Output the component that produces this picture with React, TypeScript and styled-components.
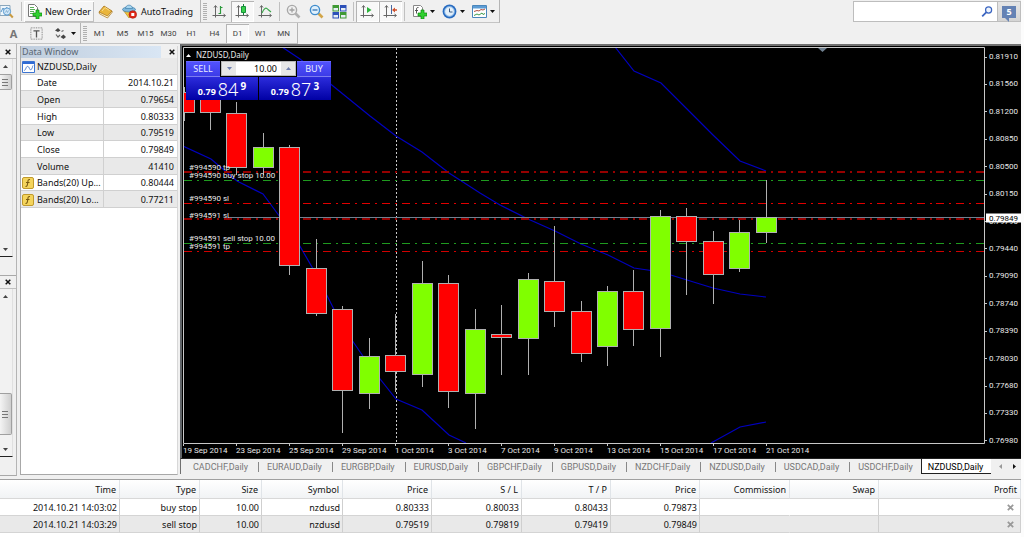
import React from "react";
import styled, { createGlobalStyle, css } from "styled-components";

const ui = '"Noto Sans", "Open Sans", sans-serif';
const narrow = 'Roboto, "Liberation Sans", sans-serif';

const GlobalStyle = createGlobalStyle`
  *, *::before, *::after { box-sizing: border-box; }
  body { margin: 0; background: #fff; font-family: ${ui}; font-size: 9px; line-height: 12px; color: #111; }
  button, input { font: inherit; color: inherit; margin: 0; padding: 0; border: 0; background: none; }
  svg { display: block; flex: none; }
`;

const Shell = styled.div`
  display: flex;
  flex-direction: column;
  height: 100vh;
  min-height: 420px;
  padding-right: 3px;
  background: #f0f0f0;
  box-shadow: inset -3px 0 #fcfcfc;
  overflow: hidden;
`;

/* ---------- toolbars ---------- */

const Toolbar = styled.div<{ $height: number }>`
  display: flex;
  flex: none;
  height: ${(p) => p.$height}px;
  background: #f0f0f0;
`;

const ToolGroup = styled.div<{ $inset?: boolean }>`
  display: flex;
  align-items: stretch;
  border-right: 1px solid #b4b4b4;
  border-bottom: 1px solid #c4c4c4;
  padding: 1px 2px 0 ${(p) => (p.$inset ? 2 : 0)}px;
`;

const Gripper = styled.span`
  width: 4px;
  margin: 2px 1px 2px 2px;
  background: repeating-linear-gradient(#b0b0b0 0 1px, #f0f0f0 1px 2px);
`;

const Separator = styled.span`
  width: 1px;
  margin: 1px 2px;
  background: #c0c0c0;
`;

const ToolButton = styled.button<{ $pressed?: boolean; $start?: boolean }>`
  display: flex;
  align-items: center;
  justify-content: ${(p) => (p.$start ? "flex-start" : "center")};
  width: ${(p) => (p.$start ? 19 : 23)}px;
  ${(p) =>
    p.$pressed &&
    css`
      background: #f8f8f8;
      box-shadow: inset 1px 1px #b4b4b4, inset -1px -1px #fff;
    `}
`;

const DropButton = styled.button`
  display: flex;
  align-items: center;
  gap: 3px;
  width: 30px;
  padding-left: 5px;
`;

const TextButton = styled.button<{ $raised?: boolean }>`
  display: flex;
  align-items: center;
  gap: 4px;
  padding: 0 5px;
  white-space: nowrap;
  ${(p) =>
    p.$raised &&
    css`
      gap: 3px;
      padding: 0 3px;
      background: #f5f5f5;
      box-shadow: inset 1px 1px #fff, inset -1px -1px #c0c0c0;
    `}
`;

const PeriodButton = styled(ToolButton)`
  font-family: ${narrow};
  font-size: 8px;
  color: #444;
`;

const LetterButton = styled(ToolButton)`
  font-size: 11px;
  font-weight: 700;
  color: #777;
`;

const SearchArea = styled.div`
  display: flex;
  margin: 1px 0 1px auto;
  border: 1px solid #bdbdbd;
`;

const SearchBox = styled.label`
  display: flex;
  align-items: center;
  width: 143px;
  padding-right: 4px;
  background: #fff;
`;

const SearchInput = styled.input`
  flex: 1;
  min-width: 0;
  padding-left: 3px;
  outline: 0;
`;

const ChatButton = styled.button`
  display: flex;
  align-items: center;
  justify-content: center;
  width: 23px;
  background: linear-gradient(#e6e6e6, #d4d4d4);
  border-left: 1px solid #bdbdbd;
`;

const ChatBadge = styled.span`
  position: relative;
  width: 14px;
  height: 12px;
  background: #6482b4;
  color: #fff;
  font-weight: 700;
  text-align: center;

  &::after {
    content: "";
    position: absolute;
    left: 3px;
    top: 12px;
    border: 2px solid transparent;
    border-top-color: #6482b4;
    border-right-color: #6482b4;
  }
`;

/* ---------- side panels ---------- */

const Main = styled.div`
  display: flex;
  flex: 1;
  min-height: 0;
`;

const SideStrip = styled.div`
  display: flex;
  flex-direction: column;
  width: 17px;
  padding-top: 2px;
  border-right: 1px solid #b4b4b4;
  border-bottom: 1px solid #a8a8a8;
`;

const SidePanel = styled.div<{ $grow: number }>`
  display: flex;
  flex-direction: column;
  flex: ${(p) => p.$grow} 1 0;
  min-height: 0;
  padding-bottom: 18px;

  & + & { border-top: 1px solid #a8a8a8; }
`;

const SideHead = styled.div`
  display: flex;
  align-items: center;
  justify-content: flex-end;
  height: 13px;
  padding-right: 5px;
  background: #f0f0f0;
  border-bottom: 1px solid #c0c0c0;
`;

const CloseButton = styled.button`
  display: flex;
  align-items: center;
  height: 12px;
`;

const ScrollTrack = styled.div`
  display: flex;
  flex-direction: column;
  flex: 1;
  align-items: flex-start;
  justify-content: space-between;
  min-height: 0;
  margin-right: 3px;
  padding: 5px 0 4px;
  border-right: 1px solid #e0e0e0;
  border-bottom: 1px solid #222;
  background: #f2f2f2;
`;

const ScrollArrow = styled.button`
  display: flex;
  align-items: center;
  height: 5px;
  margin-left: 3px;
`;

const ScrollThumb = styled.div<{ $size: number; $low?: boolean }>`
  display: flex;
  align-items: center;
  width: 12px;
  height: ${(p) => p.$size}px;
  margin: ${(p) => (p.$low ? "auto 0 12px" : "5px 0 auto")};
  padding-left: 2px;
  background: linear-gradient(90deg, #f4f4f4, #cfcfcf);
  border: 1px solid #a0a0a0;
  border-left: 0;
  border-radius: 0 2px 2px 0;
`;

const DataPanel = styled.section`
  display: flex;
  flex-direction: column;
  width: 158px;
  margin: 2px 2px 1px 3px;
  background: #fff;
  border-left: 1px solid #a8a8a8;
  border-right: 1px solid #d8d8d8;
  border-bottom: 1px solid #a8a8a8;
`;

const DataHead = styled.header`
  display: flex;
  align-items: center;
  justify-content: space-between;
  height: 12px;
  flex: none;
  padding: 0 2px 0 1px;
  color: #5a6672;
  background: linear-gradient(90deg, #bfcddd, #d9e6f4 90%, #f0f0f0 90%);
`;

const DataTable = styled.table`
  width: 100%;
  height: 150px;
  border-collapse: collapse;
  table-layout: fixed;
`;

const DataRow = styled.tr<{ $shade?: boolean }>`
  background: ${(p) => (p.$shade ? "#e9e9e9" : "#fff")};
  border-bottom: 1px solid #d0d0d0;
`;

const DataName = styled.th`
  padding: 2px 0 0;
  font-weight: 400;
  text-align: left;
`;

const NameLine = styled.span`
  display: flex;
  align-items: center;
  gap: 3px;
  padding-left: 1px;
  white-space: nowrap;
`;

const IconSlot = styled.span`
  width: 12px;
  flex: none;
`;

const DataValue = styled.td`
  padding: 2px 3px 0 0;
  text-align: right;
  border-left: 1px solid #d0d0d0;
`;

/* ---------- chart ---------- */

const ChartColumn = styled.section`
  display: flex;
  flex-direction: column;
  flex: 1;
  min-width: 0;
  padding-bottom: 2px;
`;

const ChartFrame = styled.div`
  display: grid;
  flex: 1;
  min-height: 0;
  grid-template-columns: minmax(0, 1fr) 36px;
  grid-template-rows: minmax(0, 1fr) 14px;
  padding: 1px 0 0 1px;
  background: #000;
  border-top: 2px solid #707070;
  border-left: 2px solid #606468;
  color: #e8e8e8;
  font-family: ${narrow};
  font-size: 8px;
  line-height: 10px;
`;

const Plot = styled.div`
  position: relative;
  min-height: 0;
  overflow: hidden;
`;

const OrderLabel = styled.span`
  position: absolute;
  left: 6px;
  line-height: 8px;
  transform: translateY(-100%);
  white-space: nowrap;
`;

const PriceAxis = styled.div`
  position: relative;
  min-height: 0;
`;

const PriceList = styled.ol`
  display: flex;
  flex-direction: column;
  justify-content: space-between;
  height: calc(100% + 2px);
  margin: 0;
  padding: 5px 0 0;
  list-style: none;
`;

const PriceItem = styled.li`
  display: flex;
  align-items: center;
  gap: 2px;

  &::before { content: ""; width: 2px; height: 1px; background: #c8c8c8; }
`;

const CurrentPrice = styled.span`
  position: absolute;
  left: 1px;
  right: 0;
  padding-left: 3px;
  line-height: 9px;
  transform: translateY(-50%);
  background: #fff;
  color: #000;
`;

const DateAxis = styled.div`
  display: flex;
  overflow: hidden;
`;

const DateItem = styled.span`
  flex: 0 0 53px;
  padding-top: 2px;
  white-space: nowrap;
  background: linear-gradient(#c8c8c8, #c8c8c8) 0 0 / 1px 2px no-repeat;
`;

const TradePanel = styled.div`
  position: absolute;
  left: 3px;
  top: 2px;
  width: 145px;
  font-family: ${ui};
`;

const TradeTitle = styled.div`
  display: flex;
  align-items: center;
  gap: 5px;
  height: 12px;
`;

const TradeGrid = styled.div`
  display: grid;
  grid-template-columns: 34px 38px 1px 38px 34px;
  grid-template-rows: 16px 23px;
  background: #000;
`;

const SideButton = styled.button`
  font-size: 9px;
  color: #e8ecff;
  background: linear-gradient(#5454ff, #3a3ae6);
  box-shadow: inset 0 -1px #7c7cf0, inset 0 1px #6a6aff;
`;

const VolumeBox = styled.div`
  display: flex;
  grid-column: span 3;
  margin: 0 1px 1px;
  background: #fff;
  border: 1px solid #b8b8b8;
`;

const Spin = styled.button`
  display: flex;
  align-items: center;
  justify-content: center;
  width: 14px;
  background: #e6e6e6;
`;

const VolumeInput = styled.input`
  flex: 1;
  min-width: 0;
  padding-right: 4px;
  text-align: right;
  font-size: 9px;
  color: #000;
`;

const PriceButton = styled.button`
  display: flex;
  grid-column: span 2;
  align-items: center;
  justify-content: center;
  gap: 2px;
  color: #fff;
  background: linear-gradient(#2c2cdc, #0000a4);
`;

const PriceBase = styled.b`
  font-size: 9px;
  padding-top: 6px;
`;

const PricePips = styled.span`
  font-size: 18px;
  font-weight: 300;
  line-height: 20px;
`;

const PricePoint = styled.b`
  font-size: 10px;
  padding-bottom: 6px;
`;

const TabStrip = styled.nav`
  display: flex;
  flex: none;
  height: 16px;
  border-left: 1px solid #707070;
  border-top: 1px solid #202020;
  padding-left: 4px;
  font-family: ${narrow};
`;

const Tab = styled.button<{ $active?: boolean; $last?: boolean }>`
  padding: 1px 10px 0 8px;
  color: #777;
  white-space: nowrap;

  ${(p) =>
    !p.$active &&
    !p.$last &&
    css`
      border-right: 1px solid transparent;
      background: linear-gradient(#888, #888) 100% 50% / 1px 10px no-repeat border-box;
    `}
  ${(p) =>
    p.$active &&
    css`
      padding: 1px 8px 0 6px;
      margin-left: -2px;
      color: #000;
      background: #fff;
      border-left: 1px solid #202020;
      border-bottom: 1px solid #202020;
    `}
`;

const TabArrows = styled.div`
  display: flex;
  align-items: center;
  gap: 9px;
  margin-left: auto;
  padding-right: 4px;
`;

/* ---------- terminal ---------- */

const Terminal = styled.section`
  flex: none;
  padding: 3px 0 4px;
  background: linear-gradient(#f0f0f0 0 3px, #fff 3px);
`;

const OrdersTable = styled.table`
  width: 100%;
  border-collapse: separate;
  border-spacing: 0;
  table-layout: fixed;
  border-top: 1px solid #a0a0a0;
`;

const HeadCell = styled.th`
  height: 19px;
  padding: 2px 3px 0 0;
  font-weight: 400;
  text-align: right;
  background: linear-gradient(#fff, #f1f3f5);
  border-right: 1px solid #e0e4e8;
  border-bottom: 1px solid #d8d8d8;
`;

const OrderRow = styled.tr<{ $shade?: boolean }>`
  background: ${(p) => (p.$shade ? "#e9e9e9" : "#fff")};
`;

const OrderCell = styled.td<{ $open?: boolean }>`
  height: 17px;
  padding: 1px 2px 0 0;
  text-align: right;
  border-right: 1px solid ${(p) => (p.$open ? "transparent" : "#cfcfcf")};
  border-bottom: 1px solid #d4d4d4;
`;

const RowClose = styled.button`
  display: block;
  margin: 0 4px 0 auto;
`;

/* ---------- icons ---------- */

const Cross = ({ color = "#111", size = 6 }: { color?: string; size?: number }) => (
  <svg width={size} height={size} viewBox="0 0 6 6">
    <path d="M.7.7l4.6 4.6M5.3.7L.7 5.3" stroke={color} strokeWidth="1.5" />
  </svg>
);

const Arrow = ({ dir, color = "#111" }: { dir: "up" | "down" | "left" | "right"; color?: string }) => {
  const d = { up: "M0 4L2.5 1L5 4z", down: "M0 1H5L2.5 4z", left: "M4 0V5L1 2.5z", right: "M1 0V5L4 2.5z" }[dir];
  return (
    <svg width="5" height="5" viewBox="0 0 5 5">
      <path d={d} fill={color} />
    </svg>
  );
};

const Icon = ({ children, w = 15 }: { children: React.ReactNode; w?: number }) => (
  <svg width={w} height={w} viewBox="0 0 15 15" fill="none">
    {children}
  </svg>
);

const Axes = () => (
  <path d="M3.5 2v11.5M0.5 11.5H13M2 3.5L3.5 1.5L5 3.5M11.5 10l2 1.500l-2 1.500" stroke="#666" strokeWidth="1" />
);

const Plus = () => (
  <path d="M9 6h3v3h3v3h-3v3H9v-3H6V9h3z" fill="#2fd02f" stroke="#0c8a0c" strokeWidth=".7" />
);

const ProfileIcon = () => (
  <Icon>
    <path d="M0 1.500h10v10H0z" fill="#eef6fc" stroke="#8aa6bc" />
    <path d="M1 8l2-4 2 3 2-4" stroke="#5a96c8" />
    <circle cx="7" cy="7.500" r="3.600" fill="#cfe6f8" stroke="#5b9bd0" />
    <path d="M5.500 8.500l1-2 1 2 1-2" stroke="#7fa8c8" strokeWidth=".8" />
    <path d="M9.800 10.300l3 3.200" stroke="#c89a40" strokeWidth="2" />
  </Icon>
);

const NewOrderIcon = () => (
  <Icon>
    <path d="M1.500.5h6l3 3v9h-9z" fill="#fff" stroke="#777" />
    <path d="M3 3.500h4M3 5.500h5M3 7.500h4M3 9.500h3" stroke="#58b058" />
    <Plus />
  </Icon>
);

const BookIcon = () => (
  <Icon>
    <path d="M1 8L6 2l8 5-4.500 6z" fill="#e9b53c" stroke="#a87418" strokeWidth=".8" />
    <path d="M1 8l.5 1.800 8 4.200L14 8.500V7l-4.500 5z" fill="#fff3cc" stroke="#a87418" strokeWidth=".7" />
    <path d="M4 7l3-3.500 4.500 3" stroke="#f9dc88" />
  </Icon>
);

const AutoTradingIcon = () => (
  <Icon>
    <path d="M1.500 6.500L7 14l6-7z" fill="#f3c63e" stroke="#b48a20" strokeWidth=".7" />
    <ellipse cx="7" cy="5.500" rx="6.500" ry="2.500" fill="#7fb8dc" stroke="#3f80ac" strokeWidth=".7" />
    <path d="M3.500 4.500C3.500 0 10.500 0 10.500 4.500z" fill="#a6d4ee" stroke="#3f80ac" strokeWidth=".7" />
    <circle cx="10.800" cy="10.500" r="3.800" fill="#e02818" stroke="#a81408" strokeWidth=".6" />
    <path d="M9.300 9h3v3h-3z" fill="#fff" />
  </Icon>
);

const BarsIcon = () => (
  <Icon>
    <Axes />
    <path d="M8.500 2v8M6.500 9.500h2M8.500 3.500h2" stroke="#2c9a3c" strokeWidth="1.200" />
  </Icon>
);

const CandlesIcon = () => (
  <Icon>
    <Axes />
    <path d="M8.500 0v11" stroke="#15803a" />
    <path d="M6.500 2.500h4v6h-4z" fill="#3ad04c" stroke="#15903a" />
  </Icon>
);

const LineIcon = () => (
  <Icon>
    <Axes />
    <path d="M4 9c2-5 4-6 6-3.500l3 2.500" stroke="#3aa84a" strokeWidth="1.100" />
  </Icon>
);

const LensIcon = ({ plus }: { plus?: boolean }) => (
  <Icon>
    <path d="M9.500 9.500l4 4" stroke={plus ? "#b0b0b0" : "#d2a548"} strokeWidth="2.600" />
    <circle cx="6" cy="6" r="4.600" fill={plus ? "#f0f0f0" : "#dff0fc"} stroke={plus ? "#a8a8a8" : "#3f8ccc"} strokeWidth="1.400" />
    <path d={plus ? "M3.500 6h5M6 3.500v5" : "M3.500 6h5"} stroke={plus ? "#a0a0a0" : "#3474b4"} strokeWidth="1.300" />
  </Icon>
);

const TilesIcon = () => (
  <Icon>
    <path d="M.5 1h6.500v6.500H.5zM8 8h6.500v6.500H8z" fill="#3f9a34" />
    <path d="M8 1h6.500v6.500H8zM.5 8h6.500v6.500H.5z" fill="#2c50b8" />
    <path d="M1.500 4h4.500v2.500H1.500zM9 4h4.500v2.500H9zM1.500 11h4.500v2.500H1.500zM9 11h4.500v2.500H9z" fill="#e6eef4" />
  </Icon>
);

const ScrollIcon = () => (
  <Icon>
    <Axes />
    <path d="M7 3l4.500 3L7 9z" fill="#2cb43c" />
  </Icon>
);

const ShiftIcon = () => (
  <Icon>
    <Axes />
    <path d="M8.500 1v9" stroke="#4868a0" />
    <path d="M9 6l3-2.500v1.700h2v1.600h-2v1.700z" fill="#d0502c" />
  </Icon>
);

const IndicatorIcon = () => (
  <Icon>
    <path d="M1.500 1.500h7l2 2v9h-9z" fill="#fff" stroke="#888" />
    <path d="M6.500 3.500c-2-.5-2 1-2 3v3M3 6.500h3" stroke="#555" />
    <Plus />
  </Icon>
);

const ClockIcon = () => (
  <Icon>
    <circle cx="7.500" cy="7.500" r="6.900" fill="#2a6cc0" />
    <circle cx="7.500" cy="7.500" r="4.900" fill="#e4f0fa" stroke="#7cb0e4" />
    <path d="M7.500 4.500v3.500h3" stroke="#3c5c84" />
  </Icon>
);

const TemplateIcon = () => (
  <Icon>
    <path d="M.5 1.500h14v12H.5z" fill="#fff" stroke="#4a86bc" />
    <path d="M1 2h13v2.500H1z" fill="#5c9cd4" />
    <path d="M2 7.500l3-1 2 .5 2-1.500 2 .5 2-1" stroke="#b05040" />
    <path d="M2 11.500l3-1.500 2 1 3-2 1 1.500 2-1" stroke="#3c9a4c" />
  </Icon>
);

const TextLabelIcon = () => (
  <Icon w={13}>
    <path d="M1 1h13v13H1z" stroke="#666" strokeDasharray="1 1" />
    <path d="M4 4.500h7M7.500 4.500v7.500" stroke="#555" strokeWidth="1.500" />
  </Icon>
);

const ShapesIcon = () => (
  <Icon>
    <path d="M2 4.500L5 2l2.500 2.500L5 6z" fill="#444" />
    <path d="M7.500 11L10.500 8.500 13 11l-2.500 2z" fill="#444" />
    <path d="M3 8.500l2 2.500 2-2M8.500 5.500l2-1" stroke="#666" strokeWidth="1.200" />
  </Icon>
);

const SearchIcon = () => (
  <Icon w={12}>
    <circle cx="9.500" cy="5" r="3.800" fill="#eef4fc" stroke="#3a64c0" strokeWidth="1.500" />
    <path d="M6.500 8L1.500 13" stroke="#3a64c0" strokeWidth="2.200" />
  </Icon>
);

const ChartWindowIcon = () => (
  <svg width="13" height="12" viewBox="0 0 13 12" fill="none">
    <path d="M.5.5h12v11H.5z" fill="#fff" stroke="#3c74d0" />
    <path d="M1 1h11v2H1z" fill="#2f6ad4" />
    <path d="M2 9.500c2 0 2-5 4-4s1 4 3 3 1-3 2-4" stroke="#5080d0" />
  </svg>
);

const FunctionIcon = () => (
  <svg width="12" height="12" viewBox="0 0 12 12" fill="none">
    <rect x=".5" y=".5" width="11" height="11" rx="1.500" fill="#f4d45c" stroke="#c09a2c" />
    <path d="M8 2.500c-2-.3-2 1-2.300 3.500S5 9.700 3.500 9.500M4 5.500h3.500" stroke="#7a5a10" strokeWidth="1.100" />
  </svg>
);

const ThumbGrip = () => (
  <svg width="6" height="7" viewBox="0 0 6 7">
    <path d="M0 .5h6M0 3.500h6M0 6.500h6" stroke="#777" />
  </svg>
);

/* ---------- data ---------- */

const periods = ["M1", "M5", "M15", "M30", "H1", "H4", "D1", "W1", "MN"];

const dataRows: [string, string, boolean?][] = [
  ["Date", "2014.10.21"],
  ["Open", "0.79654"],
  ["High", "0.80333"],
  ["Low", "0.79519"],
  ["Close", "0.79849"],
  ["Volume", "41410"],
  ["Bands(20) Up...", "0.80444", true],
  ["Bands(20) Lo...", "0.77211", true],
];

const priceTicks = [
  "0.81910", "0.81560", "0.81200", "0.80850", "0.80500", "0.80150", "0.79790", "0.79440",
  "0.79090", "0.78740", "0.78390", "0.78030", "0.77680", "0.77330", "0.76980",
];

const dateTicks = [
  "19 Sep 2014", "23 Sep 2014", "25 Sep 2014", "29 Sep 2014", "1 Oct 2014", "3 Oct 2014",
  "7 Oct 2014", "9 Oct 2014", "13 Oct 2014", "15 Oct 2014", "17 Oct 2014", "21 Oct 2014",
];

const orderLines = [
  { label: "#994590 tp", price: 0.80433, color: "#960000", width: 2 },
  { label: "#994590 buy stop 10.00", price: 0.80333, color: "#1f9a1f", width: 1 },
  { label: "#994590 sl", price: 0.80033, color: "#e00000", width: 1 },
  { label: "#994591 sl", price: 0.79819, color: "#960000", width: 2 },
  { label: "#994591 sell stop 10.00", price: 0.79519, color: "#1f9a1f", width: 1 },
  { label: "#994591 tp", price: 0.79419, color: "#d00000", width: 1 },
];

/* Drawing space of the plot: prices run from the top tick to the bottom tick. */
const PLOT = { w: 802, h: 397 };
const priceY = (p: number) => 10.5 + ((0.8191 - p) / 0.0493) * 383;
const pct = (y: number) => `${(y / PLOT.h) * 100}%`;

/* [high, body top, body bottom, low, rising] */
const candles: [number, number, number, number, boolean?][] = [
  [40, 45, 66, 74],
  [45, 48, 66, 83],
  [55, 66, 121, 128],
  [86, 100, 121, 128, true],
  [98, 100, 219, 228],
  [192, 221, 267, 269],
  [259, 262, 344, 386],
  [291, 309, 347, 362, true],
  [267, 308, 325, 345],
  [214, 236, 328, 340, true],
  [228, 236, 345, 361],
  [262, 282, 347, 382, true],
  [258, 287, 291, 328],
  [226, 232, 292, 328, true],
  [179, 234, 265, 280],
  [254, 264, 307, 315],
  [239, 244, 300, 319, true],
  [223, 244, 283, 299],
  [163, 169, 282, 310, true],
  [161, 169, 195, 248],
  [184, 194, 228, 257],
  [173, 185, 222, 225, true],
  [133, 170, 186, 196, true],
];

const bands = [
  "432,0 451,24 478,36 504,62 530,88 557,114 583,124",
  "99,0 117,12 150,39 187,69 213,89 239,105 266,126 297,146 317,158 345,172 372,184 398,197 425,208 451,221 478,225 504,233 530,241 557,247 583,250",
  "0,99 28,112 54,134 80,147 97,170 107,182 133,227 160,280 186,318 213,352 239,363 266,388 283,396",
  "528,396 557,380 583,375",
];

const tabs = [
  "CADCHF,Daily", "EURAUD,Daily", "EURGBP,Daily", "EURUSD,Daily", "GBPCHF,Daily", "GBPUSD,Daily",
  "NZDCHF,Daily", "NZDUSD,Daily", "USDCAD,Daily", "USDCHF,Daily", "NZDUSD,Daily",
];

const columns: [string, number?][] = [
  ["Time", 120], ["Type", 80], ["Size", 62], ["Symbol", 81], ["Price", 89], ["S / L", 90],
  ["T / P", 89], ["Price", 89], ["Commission", 90], ["Swap", 89], ["Profit"],
];

const orders = [
  ["2014.10.21 14:03:02", "buy stop", "10.00", "nzdusd", "0.80333", "0.80033", "0.80433", "0.79873", "", ""],
  ["2014.10.21 14:03:29", "sell stop", "10.00", "nzdusd", "0.79519", "0.79819", "0.79419", "0.79849", "", ""],
];

/* ---------- sections ---------- */

function MainToolbar() {
  return (
    <Toolbar $height={23}>
      <ToolGroup>
        <ToolButton $start aria-label="Profiles"><ProfileIcon /></ToolButton>
        <Separator />
        <TextButton $raised><NewOrderIcon />New Order</TextButton>
        <ToolButton aria-label="MetaEditor"><BookIcon /></ToolButton>
        <TextButton><AutoTradingIcon />AutoTrading</TextButton>
      </ToolGroup>
      <ToolGroup>
        <Gripper />
        <ToolButton aria-label="Bar chart"><BarsIcon /></ToolButton>
        <ToolButton $pressed aria-label="Candlesticks"><CandlesIcon /></ToolButton>
        <ToolButton aria-label="Line chart"><LineIcon /></ToolButton>
        <Separator />
        <ToolButton aria-label="Zoom in"><LensIcon plus /></ToolButton>
        <ToolButton aria-label="Zoom out"><LensIcon /></ToolButton>
        <ToolButton aria-label="Tile windows"><TilesIcon /></ToolButton>
        <Separator />
        <ToolButton $pressed aria-label="Auto scroll"><ScrollIcon /></ToolButton>
        <ToolButton $pressed aria-label="Chart shift"><ShiftIcon /></ToolButton>
        <Separator />
        <DropButton aria-label="Indicators"><IndicatorIcon /><Arrow dir="down" /></DropButton>
        <DropButton aria-label="Periods"><ClockIcon /><Arrow dir="down" /></DropButton>
        <DropButton aria-label="Templates"><TemplateIcon /><Arrow dir="down" /></DropButton>
      </ToolGroup>
      <SearchArea>
        <SearchBox>
          <SearchInput type="text" aria-label="Search" />
          <SearchIcon />
        </SearchBox>
        <ChatButton aria-label="Messages"><ChatBadge>5</ChatBadge></ChatButton>
      </SearchArea>
    </Toolbar>
  );
}

function PeriodToolbar() {
  return (
    <Toolbar $height={21}>
      <ToolGroup $inset>
        <LetterButton>A</LetterButton>
        <ToolButton aria-label="Text label"><TextLabelIcon /></ToolButton>
        <DropButton aria-label="Arrows"><ShapesIcon /><Arrow dir="down" /></DropButton>
      </ToolGroup>
      <ToolGroup>
        <Gripper />
        {periods.map((p) => (
          <PeriodButton key={p} $pressed={p === "D1"}>{p}</PeriodButton>
        ))}
      </ToolGroup>
    </Toolbar>
  );
}

function SidePane({ grow, thumb, low }: { grow: number; thumb: number; low?: boolean }) {
  return (
    <SidePanel $grow={grow}>
      <SideHead><CloseButton aria-label="Close panel"><Cross /></CloseButton></SideHead>
      <ScrollTrack>
        <ScrollArrow aria-label="Scroll up"><Arrow dir="up" color="#444" /></ScrollArrow>
        <ScrollThumb $size={thumb} $low={low}><ThumbGrip /></ScrollThumb>
        <ScrollArrow aria-label="Scroll down"><Arrow dir="down" color="#444" /></ScrollArrow>
      </ScrollTrack>
    </SidePanel>
  );
}

function DataWindow() {
  return (
    <DataPanel>
      <DataHead>
        Data Window
        <CloseButton aria-label="Close Data Window"><Cross /></CloseButton>
      </DataHead>
      <DataTable>
        <colgroup><col /><col width="74" /></colgroup>
        <tbody>
          <DataRow $shade>
            <DataName colSpan={2}>
              <NameLine><IconSlot><ChartWindowIcon /></IconSlot>NZDUSD,Daily</NameLine>
            </DataName>
          </DataRow>
          {dataRows.map(([name, value, band], i) => (
            <DataRow key={name} $shade={i % 2 === 1}>
              <DataName scope="row">
                <NameLine><IconSlot>{band && <FunctionIcon />}</IconSlot>{name}</NameLine>
              </DataName>
              <DataValue>{value}</DataValue>
            </DataRow>
          ))}
        </tbody>
      </DataTable>
    </DataPanel>
  );
}

function Quote({ side, base, pips, point }: { side: string; base: string; pips: string; point: string }) {
  return (
    <PriceButton aria-label={`${side} ${base}${pips}${point}`}>
      <PriceBase>{base}</PriceBase>
      <PricePips>{pips}</PricePips>
      <PricePoint>{point}</PricePoint>
    </PriceButton>
  );
}

function OneClickTrading() {
  return (
    <TradePanel>
      <TradeTitle><Arrow dir="up" color="#fff" />NZDUSD,Daily</TradeTitle>
      <TradeGrid>
        <SideButton>SELL</SideButton>
        <VolumeBox>
          <Spin aria-label="Less"><Arrow dir="down" color="#7080b0" /></Spin>
          <VolumeInput aria-label="Volume" defaultValue="10.00" />
          <Spin aria-label="More"><Arrow dir="up" color="#7080b0" /></Spin>
        </VolumeBox>
        <SideButton>BUY</SideButton>
        <Quote side="Sell" base="0.79" pips="84" point="9" />
        <span />
        <Quote side="Buy" base="0.79" pips="87" point="3" />
      </TradeGrid>
    </TradePanel>
  );
}

function Chart() {
  const bid = Math.floor(priceY(0.79849)) + 0.5;
  return (
    <ChartFrame>
      <Plot>
        <svg width="100%" height="100%" viewBox={`0 0 ${PLOT.w} ${PLOT.h}`} preserveAspectRatio="none">
          <path d="M213.500 1V396" stroke="#c8c8c8" strokeDasharray="2 2" />
          {bands.map((points) => (
            <polyline key={points} points={points} fill="none" stroke="#0000c0" strokeWidth="1.200" />
          ))}
          <g shapeRendering="crispEdges">
            {orderLines.map((o) => {
              const y = Math.floor(priceY(o.price)) + (o.width === 1 ? 0.5 : 0);
              return (
                <path key={o.label} d={`M1 ${y}H801`} stroke={o.color} strokeWidth={o.width} strokeDasharray="8 5 2 4.800" />
              );
            })}
            <path d={`M45 ${bid}H801`} stroke="#708090" />
          </g>
          {candles.map(([high, top, bottom, low, up], i) => {
            const x = Math.round(0.5 + i * 26.47);
            return (
              <g key={i} stroke="#b0b0b0">
                <path d={`M${x + 0.5} ${high}V${low}`} />
                <rect x={x - 9.5} y={top + 0.5} width="20" height={bottom - top - 1} fill={up ? "#80ff00" : "#ff0000"} />
              </g>
            );
          })}
          <path d="M635 1h9l-4.500 4z" fill="#708090" />
          <path d="M.5.5H801.500V396.500H.5z" fill="none" stroke="#c8c8c8" />
        </svg>
        {orderLines.map((o) => (
          <OrderLabel key={o.label} style={{ top: pct(priceY(o.price)) }}>{o.label}</OrderLabel>
        ))}
        <OneClickTrading />
      </Plot>
      <PriceAxis>
        <PriceList>{priceTicks.map((p) => <PriceItem key={p}>{p}</PriceItem>)}</PriceList>
        <CurrentPrice style={{ top: pct(priceY(0.79849)) }}>0.79849</CurrentPrice>
      </PriceAxis>
      <DateAxis>{dateTicks.map((d) => <DateItem key={d}>{d}</DateItem>)}</DateAxis>
    </ChartFrame>
  );
}

function ChartTabs() {
  return (
    <TabStrip>
      {tabs.map((t, i) => (
        <Tab key={i} $active={i === tabs.length - 1} $last={i === tabs.length - 2}>{t}</Tab>
      ))}
      <TabArrows>
        <CloseButton aria-label="Previous tabs"><Arrow dir="left" color="#999" /></CloseButton>
        <CloseButton aria-label="Next tabs"><Arrow dir="right" /></CloseButton>
      </TabArrows>
    </TabStrip>
  );
}

function TradeTerminal() {
  return (
    <Terminal>
      <OrdersTable>
        <colgroup>{columns.map(([, w], i) => <col key={i} width={w} />)}</colgroup>
        <thead>
          <tr>{columns.map(([name], i) => <HeadCell key={i} scope="col">{name}</HeadCell>)}</tr>
        </thead>
        <tbody>
          {orders.map((row, r) => (
            <OrderRow key={r} $shade={r === 1}>
              {row.map((cell, i) => <OrderCell key={i} $open={i === 8}>{cell}</OrderCell>)}
              <OrderCell>
                <RowClose aria-label="Delete order"><Cross color="#999" size={7} /></RowClose>
              </OrderCell>
            </OrderRow>
          ))}
        </tbody>
      </OrdersTable>
    </Terminal>
  );
}

export default function App() {
  return (
    <>
      <GlobalStyle />
      <Shell>
        <MainToolbar />
        <PeriodToolbar />
        <Main>
          <SideStrip>
            <SidePane grow={231} thumb={16} />
            <SidePane grow={198} thumb={42} low />
          </SideStrip>
          <DataWindow />
          <ChartColumn>
            <Chart />
            <ChartTabs />
          </ChartColumn>
        </Main>
        <TradeTerminal />
      </Shell>
    </>
  );
}
